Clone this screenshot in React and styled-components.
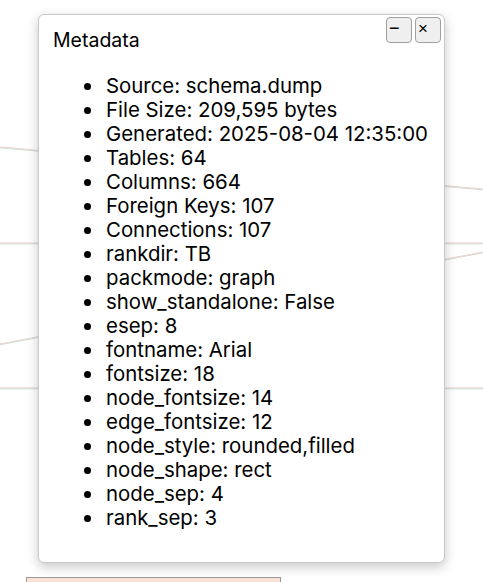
import React from 'react';
import styled, { createGlobalStyle } from 'styled-components';

const GlobalStyle = createGlobalStyle`
  html, body {
    margin: 0;
    padding: 0;
    background: #ffffff;
    overflow: hidden;
  }
`;

const Canvas = styled.div`
  position: relative;
  width: 483px;
  height: 582px;
  overflow: hidden;
  background: #ffffff;
  font-family: Inter, 'Liberation Sans', Arial, sans-serif;
`;

const EdgeLayer = styled.svg`
  position: absolute;
  left: 0;
  top: 0;
`;

const Panel = styled.div`
  position: absolute;
  left: 38px;
  top: 14px;
  width: 407px;
  height: 549px;
  box-sizing: border-box;
  padding: 14px 14px;
  background: #ffffff;
  border: 1px solid #c8c8c8;
  border-radius: 6px;
  box-shadow: 0 4px 12px rgba(0, 0, 0, 0.22);
  color: #000000;
`;

const Title = styled.div`
  font-size: 19.5px;
  line-height: 23px;
`;

const Controls = styled.div`
  position: absolute;
  top: 2px;
  right: 3px;
  display: flex;
  gap: 3px;
`;

const WinButton = styled.button`
  width: 26px;
  height: 26px;
  box-sizing: border-box;
  padding: 0 0 4px 2px;
  border: 1px solid #a0a0a0;
  border-radius: 4px;
  background: #efefef;
  color: #000000;
  font-family: 'Liberation Sans', Arial, sans-serif;
  font-size: ${(props) => props.size || 15}px;
  line-height: 1;
  text-align: left;
`;

const InfoList = styled.ul`
  margin: 22px 0 0;
  padding-left: 53px;
  list-style: none;
  font-size: 20.4px;
  line-height: 24px;
`;

const InfoItem = styled.li`
  position: relative;

  &::before {
    content: '';
    position: absolute;
    left: -22px;
    top: 9px;
    width: 7px;
    height: 7px;
    border-radius: 50%;
    background: #000000;
  }
`;

const items = [
  ['Source', 'schema.dump'],
  ['File Size', '209,595 bytes'],
  ['Generated', '2025-08-04 12:35:00'],
  ['Tables', '64'],
  ['Columns', '664'],
  ['Foreign Keys', '107'],
  ['Connections', '107'],
  ['rankdir', 'TB'],
  ['packmode', 'graph'],
  ['show_standalone', 'False'],
  ['esep', '8'],
  ['fontname', 'Arial'],
  ['fontsize', '18'],
  ['node_fontsize', '14'],
  ['edge_fontsize', '12'],
  ['node_style', 'rounded,filled'],
  ['node_shape', 'rect'],
  ['node_sep', '4'],
  ['rank_sep', '3'],
];

const edges = [
  [0, 147, 483, 189],
  [0, 243, 483, 243],
  [0, 344, 483, 252],
  [0, 388, 483, 388],
];

const Edge = ({ e }) => (
  <g>
    <line x1={e[0]} y1={e[1]} x2={e[2]} y2={e[3]} stroke="#f0cfcf" strokeWidth="1" />
    <line x1={e[0]} y1={e[1] + 0.8} x2={e[2]} y2={e[3] + 0.8} stroke="#cfdcd3" strokeWidth="1" />
  </g>
);

const App = () => (
  <Canvas>
    <GlobalStyle />
    <EdgeLayer width="483" height="582">
      {edges.map((e, i) => (
        <Edge e={e} key={`edge_${i}`} />
      ))}
      <rect x="26.5" y="577.5" width="254" height="20" fill="#fbe2d6" stroke="#9a9a9a" />
    </EdgeLayer>
    <Panel>
      <Title>Metadata</Title>
      <Controls>
        <WinButton size={18}>−</WinButton>
        <WinButton size={17}>×</WinButton>
      </Controls>
      <InfoList>
        {items.map(([k, v]) => (
          <InfoItem key={k}>
            {k}: {v}
          </InfoItem>
        ))}
      </InfoList>
    </Panel>
  </Canvas>
);

export default App;
